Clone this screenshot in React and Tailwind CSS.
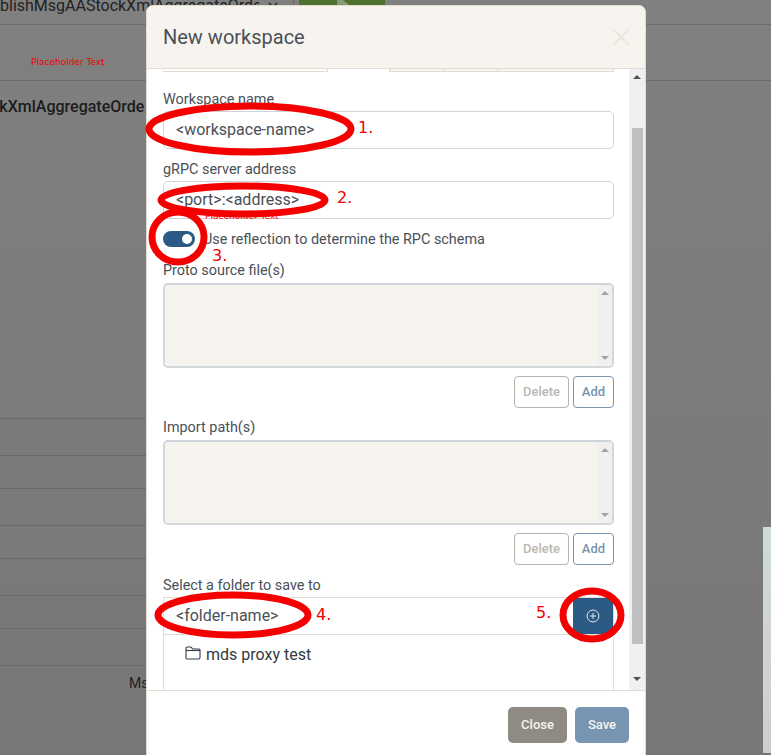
import React from 'react';

const rowLines = [37, 33, 37, 33, 37, 33, 37];

const FieldLabel = ({ children, className = '' }) => (
  <label className={`block text-[14.4px] leading-[21px] text-[#495057] ${className}`}>{children}</label>
);

const TextField = ({ value }) => (
  <div className="h-[38px] rounded-[5px] border border-[#ced4da] bg-white pl-3 text-base leading-[36px] text-[#495057]">
    {value}
  </div>
);

const ListBox = () => (
  <div className="flex h-[85px] overflow-hidden rounded-[5px] border-2 border-[#d5d8da] border-t-[#ced4da] bg-[#f7f4ef]">
    <div className="flex-1" />
    <div className="flex w-[15px] flex-col items-center justify-between bg-[#f0f0f0] py-[6px]">
      <span className="h-0 w-0 border-x-[4px] border-b-[4px] border-x-transparent border-b-[#a3a3a3]" />
      <span className="h-0 w-0 border-x-[4px] border-t-[4px] border-x-transparent border-t-[#a3a3a3]" />
    </div>
  </div>
);

const ListButtons = () => (
  <div className="mt-2 flex justify-end gap-1">
    <button className="h-8 w-[55px] rounded-[4px] border border-[#b5b3ab] bg-white text-[13px] font-medium text-[#bab8b2]">
      Delete
    </button>
    <button className="h-8 w-[41px] rounded-[4px] border border-[#7795b0] bg-white text-[13px] font-medium text-[#7795b0]">
      Add
    </button>
  </div>
);

const Note = ({ className, children }) => (
  <span className={`absolute font-['DejaVu_Sans',sans-serif] text-base leading-5 text-[#f00000] ${className}`}>{children}</span>
);

// red marks drawn on top of the screenshot
const Markup = () => (
  <>
    <svg className="pointer-events-none absolute inset-0" width="771" height="755" fill="none" stroke="#f50000" strokeWidth="7">
      <ellipse cx="250" cy="129" rx="101" ry="23" />
      <ellipse cx="243" cy="200" rx="82" ry="14" />
      <ellipse cx="178" cy="237" rx="26" ry="25" />
      <ellipse cx="233" cy="615" rx="75" ry="20" />
      <ellipse cx="592" cy="615" rx="29" ry="24" />
    </svg>
    <Note className="left-[358px] top-[118px]">1.</Note>
    <Note className="left-[337px] top-[188px]">2.</Note>
    <Note className="left-[212px] top-[246px]">3.</Note>
    <Note className="left-[316px] top-[605px]">4.</Note>
    <Note className="left-[536px] top-[603px]">5.</Note>
  </>
);

const Background = () => (
  <div className="h-full w-full bg-linear-to-b from-[#808080] to-[#777777]">
    <div className="flex h-[25px] items-start border-b border-[#6b6b6b]">
      <div className="flex h-[24px] w-[294px] items-start border-r border-[#6b6b6b]">
        <span className="-mt-[6px] w-[259px] overflow-hidden whitespace-nowrap text-base leading-6 text-[#222]">blishMsgAAStockXmlAggregateOrde</span>
        <svg width="12" height="8" viewBox="0 0 12 8" fill="none" stroke="#222" strokeWidth="1.5" className="ml-[8px] mt-[2px] shrink-0">
          <path d="M2 1l4 4 4-4" />
        </svg>
      </div>
      <div className="ml-[5px] h-[5px] w-[86px] overflow-hidden bg-[#4f6f2f]">
        <svg width="86" height="5">
          <path d="M38 0h6l6 5h-12z" fill="#8a9a78" />
        </svg>
      </div>
    </div>
    <div className="flex h-[56px] items-center border-b border-[#6f6a64] pl-[31px] pt-[20px]">
      <span className="font-['DejaVu_Sans',sans-serif] text-[9px] text-[#f00000]">Placeholder Text</span>
    </div>
    <div className="-ml-[9px] whitespace-nowrap pt-[14px] text-base font-medium leading-6 text-[#1c1c1c]">ckXmlAggregateOrde</div>
    <div className="mt-[299px] w-[146px] border-t border-[#696969]">
      {rowLines.map((h, i) => (
        <div key={i} style={{ height: h }} className="border-b border-[#696969]" />
      ))}
    </div>
    <div className="w-[146px] overflow-hidden whitespace-nowrap pl-[129px] pt-[7px] text-sm leading-5 text-[#222]">Msg</div>
  </div>
);

const App = () => (
  <div className="relative h-[755px] w-[771px] overflow-hidden font-['Roboto',sans-serif]">
    <Background />

    {/* panel peeking in from the right */}
    <div className="absolute bottom-[2px] right-0 top-[527px] w-2 bg-linear-to-b from-[#d0d9dc] to-[#cbd0c8]" />

    <div className="absolute left-[146px] top-[5px] flex h-[760px] w-[500px] flex-col overflow-hidden rounded-t-[7px] border border-[#e2dbcf] bg-white">
      <div className="flex h-[63px] shrink-0 items-center justify-between border-b border-[#e2dbcf] bg-[#f7f4ef] pl-4 pr-[15px]">
        <h5 className="text-xl font-normal text-[#495057]">New workspace</h5>
        <svg width="18" height="18" viewBox="0 0 18 18" stroke="#e8e1d7" strokeWidth="1.6">
          <path d="M1 1l16 16M17 1L1 17" />
        </svg>
      </div>

      <div className="flex h-[622px] shrink-0 border-b border-[#e2dbcf]">
        <div className="min-w-0 flex-1 overflow-hidden pl-4 pr-4">
          {/* bottom edge of the tabs, scrolled out of view */}
          <div className="flex h-[3px] w-[451px]">
            <div className="h-[3px] w-[165px] border-b border-r border-[#e2dbcf]" />
            <div className="w-[61px]" />
            <div className="h-[3px] w-[55px] border border-t-0 border-[#e2dbcf] bg-[#f7f4ef]" />
            <div className="h-[3px] w-[54px] border-y border-r border-t-0 border-[#e2dbcf] bg-[#f7f4ef]" />
            <div className="h-[3px] w-[116px] border-b border-r border-[#e2dbcf] bg-[#f7f4ef]" />
          </div>

          <div className="w-[451px]">
            <FieldLabel className="mt-[17px] mb-[1px]">Workspace name</FieldLabel>
            <TextField value="<workspace-name>" />

            <FieldLabel className="mt-[10px] mb-[1px]">gRPC server address</FieldLabel>
            <TextField value="<port>:<address>" />

            <div className="mt-3 flex h-4 items-center gap-2">
              <div className="flex h-4 w-8 items-center justify-end rounded-full bg-[#2b5b84] pr-[3px]">
                <span className="h-[10px] w-[10px] rounded-full bg-white" />
              </div>
              <span className="pt-[2px] text-[14.4px] text-[#495057]">Use reflection to determine the RPC schema</span>
            </div>

            <FieldLabel className="mt-[13px] mb-[2px]">Proto source file(s)</FieldLabel>
            <ListBox />
            <ListButtons />

            <FieldLabel className="mt-[9px] mb-[2px]">Import path(s)</FieldLabel>
            <ListBox />
            <ListButtons />

            <FieldLabel className="mt-[10px] mb-[1px]">Select a folder to save to</FieldLabel>
            <div className="border border-b-0 border-[#e2dbcf]">
              <div className="flex h-[37px] items-center justify-between border-b border-[#e2dbcf] pl-3">
                <span className="text-base text-[#495057]">&lt;folder-name&gt;</span>
                <button className="flex h-[36px] w-10 items-center justify-center bg-[#2b5b84]">
                  <svg width="14" height="14" viewBox="0 0 16 16" fill="none" stroke="#e8eef3" strokeWidth="1.1">
                    <circle cx="8" cy="8" r="6.8" />
                    <path d="M8 4.5v7M4.5 8h7" />
                  </svg>
                </button>
              </div>
              <div className="flex h-[56px] items-start gap-[5px] pl-[21px] pt-[8px]">
                <svg width="16" height="14" viewBox="0 0 16 14" fill="none" stroke="#343a40" strokeWidth="1.1" className="mt-[3px]">
                  <path d="M1 3V2.2C1 1.5 1.5 1 2.2 1h3.2c.5 0 .9.2 1.2.6L7.5 3H14c.6 0 1 .5 1 1v7.8c0 .7-.5 1.2-1.2 1.2H2.2C1.5 13 1 12.5 1 11.8z" />
                  <path d="M1 4.5h14" />
                </svg>
                <span className="text-base leading-6 text-[#343a40]">mds proxy test</span>
              </div>
            </div>
          </div>
        </div>

        {/* page scrollbar */}
        <div className="flex w-[16px] shrink-0 flex-col items-center bg-[#f0f0f0] pt-[6px]">
          <span className="h-0 w-0 border-x-[4px] border-b-[4px] border-x-transparent border-b-[#505050]" />
          <div className="mt-[49px] h-[516px] w-[11px] bg-[#bfbfbf]" />
          <span className="mt-[33px] h-0 w-0 border-x-[4px] border-t-[4px] border-x-transparent border-t-[#505050]" />
        </div>
      </div>

      <div className="flex justify-end gap-2 pr-4 pt-[16px]">
        <button className="h-9 w-[59px] rounded-[5px] bg-[#8f8b82] text-[13px] font-medium text-[#f7f4ef]">Close</button>
        <button className="h-9 w-[54px] rounded-[5px] bg-[#7795b0] text-[13px] font-medium text-[#f7f4ef]">Save</button>
      </div>
    </div>

    <span className="absolute left-[205px] top-[210px] font-['DejaVu_Sans',sans-serif] text-[9px] leading-3 text-[#f00000]">Placeholder Text</span>
    <Markup />
  </div>
);

export default App;
